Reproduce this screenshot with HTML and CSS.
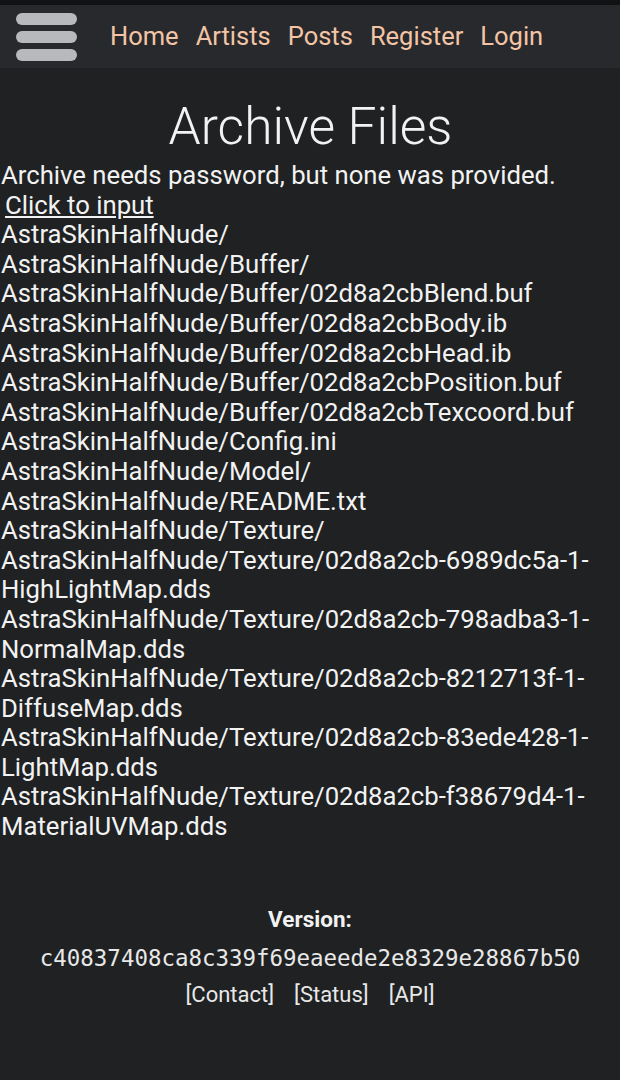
FILE: index.html
```html
<!DOCTYPE html>
<html>
<head>
<meta charset="utf-8">
<link rel="stylesheet" href="styles.css">
</head>
<body>
<div class="topstrip"></div>
<header class="header">
  <div class="burger"><span></span><span></span><span></span></div>
  <nav class="nav">
    <a href="#">Home</a>
    <a href="#">Artists</a>
    <a href="#">Posts</a>
    <a href="#">Register</a>
    <a href="#">Login</a>
  </nav>
</header>
<main class="main">
  <h1 class="title">Archive Files</h1>
  <div class="msg">Archive needs password, but none was provided.</div>
  <div class="msg"><a class="input-link" href="#">Click to input</a></div>
  <ul class="files">
    <li>AstraSkinHalfNude/</li>
    <li>AstraSkinHalfNude/Buffer/</li>
    <li>AstraSkinHalfNude/Buffer/02d8a2cbBlend.buf</li>
    <li>AstraSkinHalfNude/Buffer/02d8a2cbBody.ib</li>
    <li>AstraSkinHalfNude/Buffer/02d8a2cbHead.ib</li>
    <li>AstraSkinHalfNude/Buffer/02d8a2cbPosition.buf</li>
    <li>AstraSkinHalfNude/Buffer/02d8a2cbTexcoord.buf</li>
    <li>AstraSkinHalfNude/Config.ini</li>
    <li>AstraSkinHalfNude/Model/</li>
    <li>AstraSkinHalfNude/README.txt</li>
    <li>AstraSkinHalfNude/Texture/</li>
    <li>AstraSkinHalfNude/Texture/02d8a2cb-6989dc5a-1-HighLightMap.dds</li>
    <li>AstraSkinHalfNude/Texture/02d8a2cb-798adba3-1-NormalMap.dds</li>
    <li>AstraSkinHalfNude/Texture/02d8a2cb-8212713f-1-DiffuseMap.dds</li>
    <li>AstraSkinHalfNude/Texture/02d8a2cb-83ede428-1-LightMap.dds</li>
    <li>AstraSkinHalfNude/Texture/02d8a2cb-f38679d4-1-MaterialUVMap.dds</li>
  </ul>
</main>
<footer class="footer">
  <div class="ver-label">Version:</div>
  <div class="hash">c40837408ca8c339f69eaeede2e8329e28867b50</div>
  <div class="links"><a href="#">[Contact]</a><a href="#">[Status]</a><a href="#">[API]</a></div>
</footer>
</body>
</html>
```

FILE: styles.css
```css
html, body {
  margin: 0;
  padding: 0;
  background: #1f2123;
}
body {
  font-family: Roboto, "Liberation Sans", sans-serif;
  color: #f2f2f2;
  width: 620px;
}
.topstrip {
  height: 5px;
  background: #101214;
}
.header {
  height: 63px;
  background: #28292c;
  display: flex;
  align-items: center;
}
.burger {
  display: flex;
  flex-direction: column;
  gap: 6px;
  margin-left: 16px;
  width: 61px;
}
.burger span {
  display: block;
  height: 12px;
  border-radius: 6px;
  background: #b8b9bd;
}
.nav {
  display: flex;
  gap: 17px;
  margin-left: 33px;
  margin-top: -2px;
}
.nav a {
  color: #f3c4a6;
  text-decoration: none;
  font-size: 25.5px;
}
.main {
  padding: 0 0 0 1px;
}
.title {
  margin: 24px 0 0 0;
  text-align: center;
  font-weight: 300;
  font-size: 51.5px;
  line-height: 69px;
}
.msg, .files li {
  font-size: 25.7px;
  line-height: 29.6px;
}
.input-link {
  color: #f2f2f2;
  margin-left: 4px;
  text-decoration: underline;
}
.files {
  list-style: none;
  margin: 0;
  padding: 0;
  width: 610px;
}
.footer {
  margin-top: 60px;
  text-align: center;
}
.ver-label {
  font-weight: 700;
  font-size: 22.5px;
  line-height: 34px;
}
.hash {
  font-family: "DejaVu Sans Mono", monospace;
  font-size: 22.45px;
  line-height: 44px;
  color: #e8e8e8;
}
.links {
  display: flex;
  justify-content: center;
  gap: 20px;
  font-size: 22px;
  line-height: 30px;
}
.links a {
  color: #e8e8e8;
  text-decoration: none;
}
```
